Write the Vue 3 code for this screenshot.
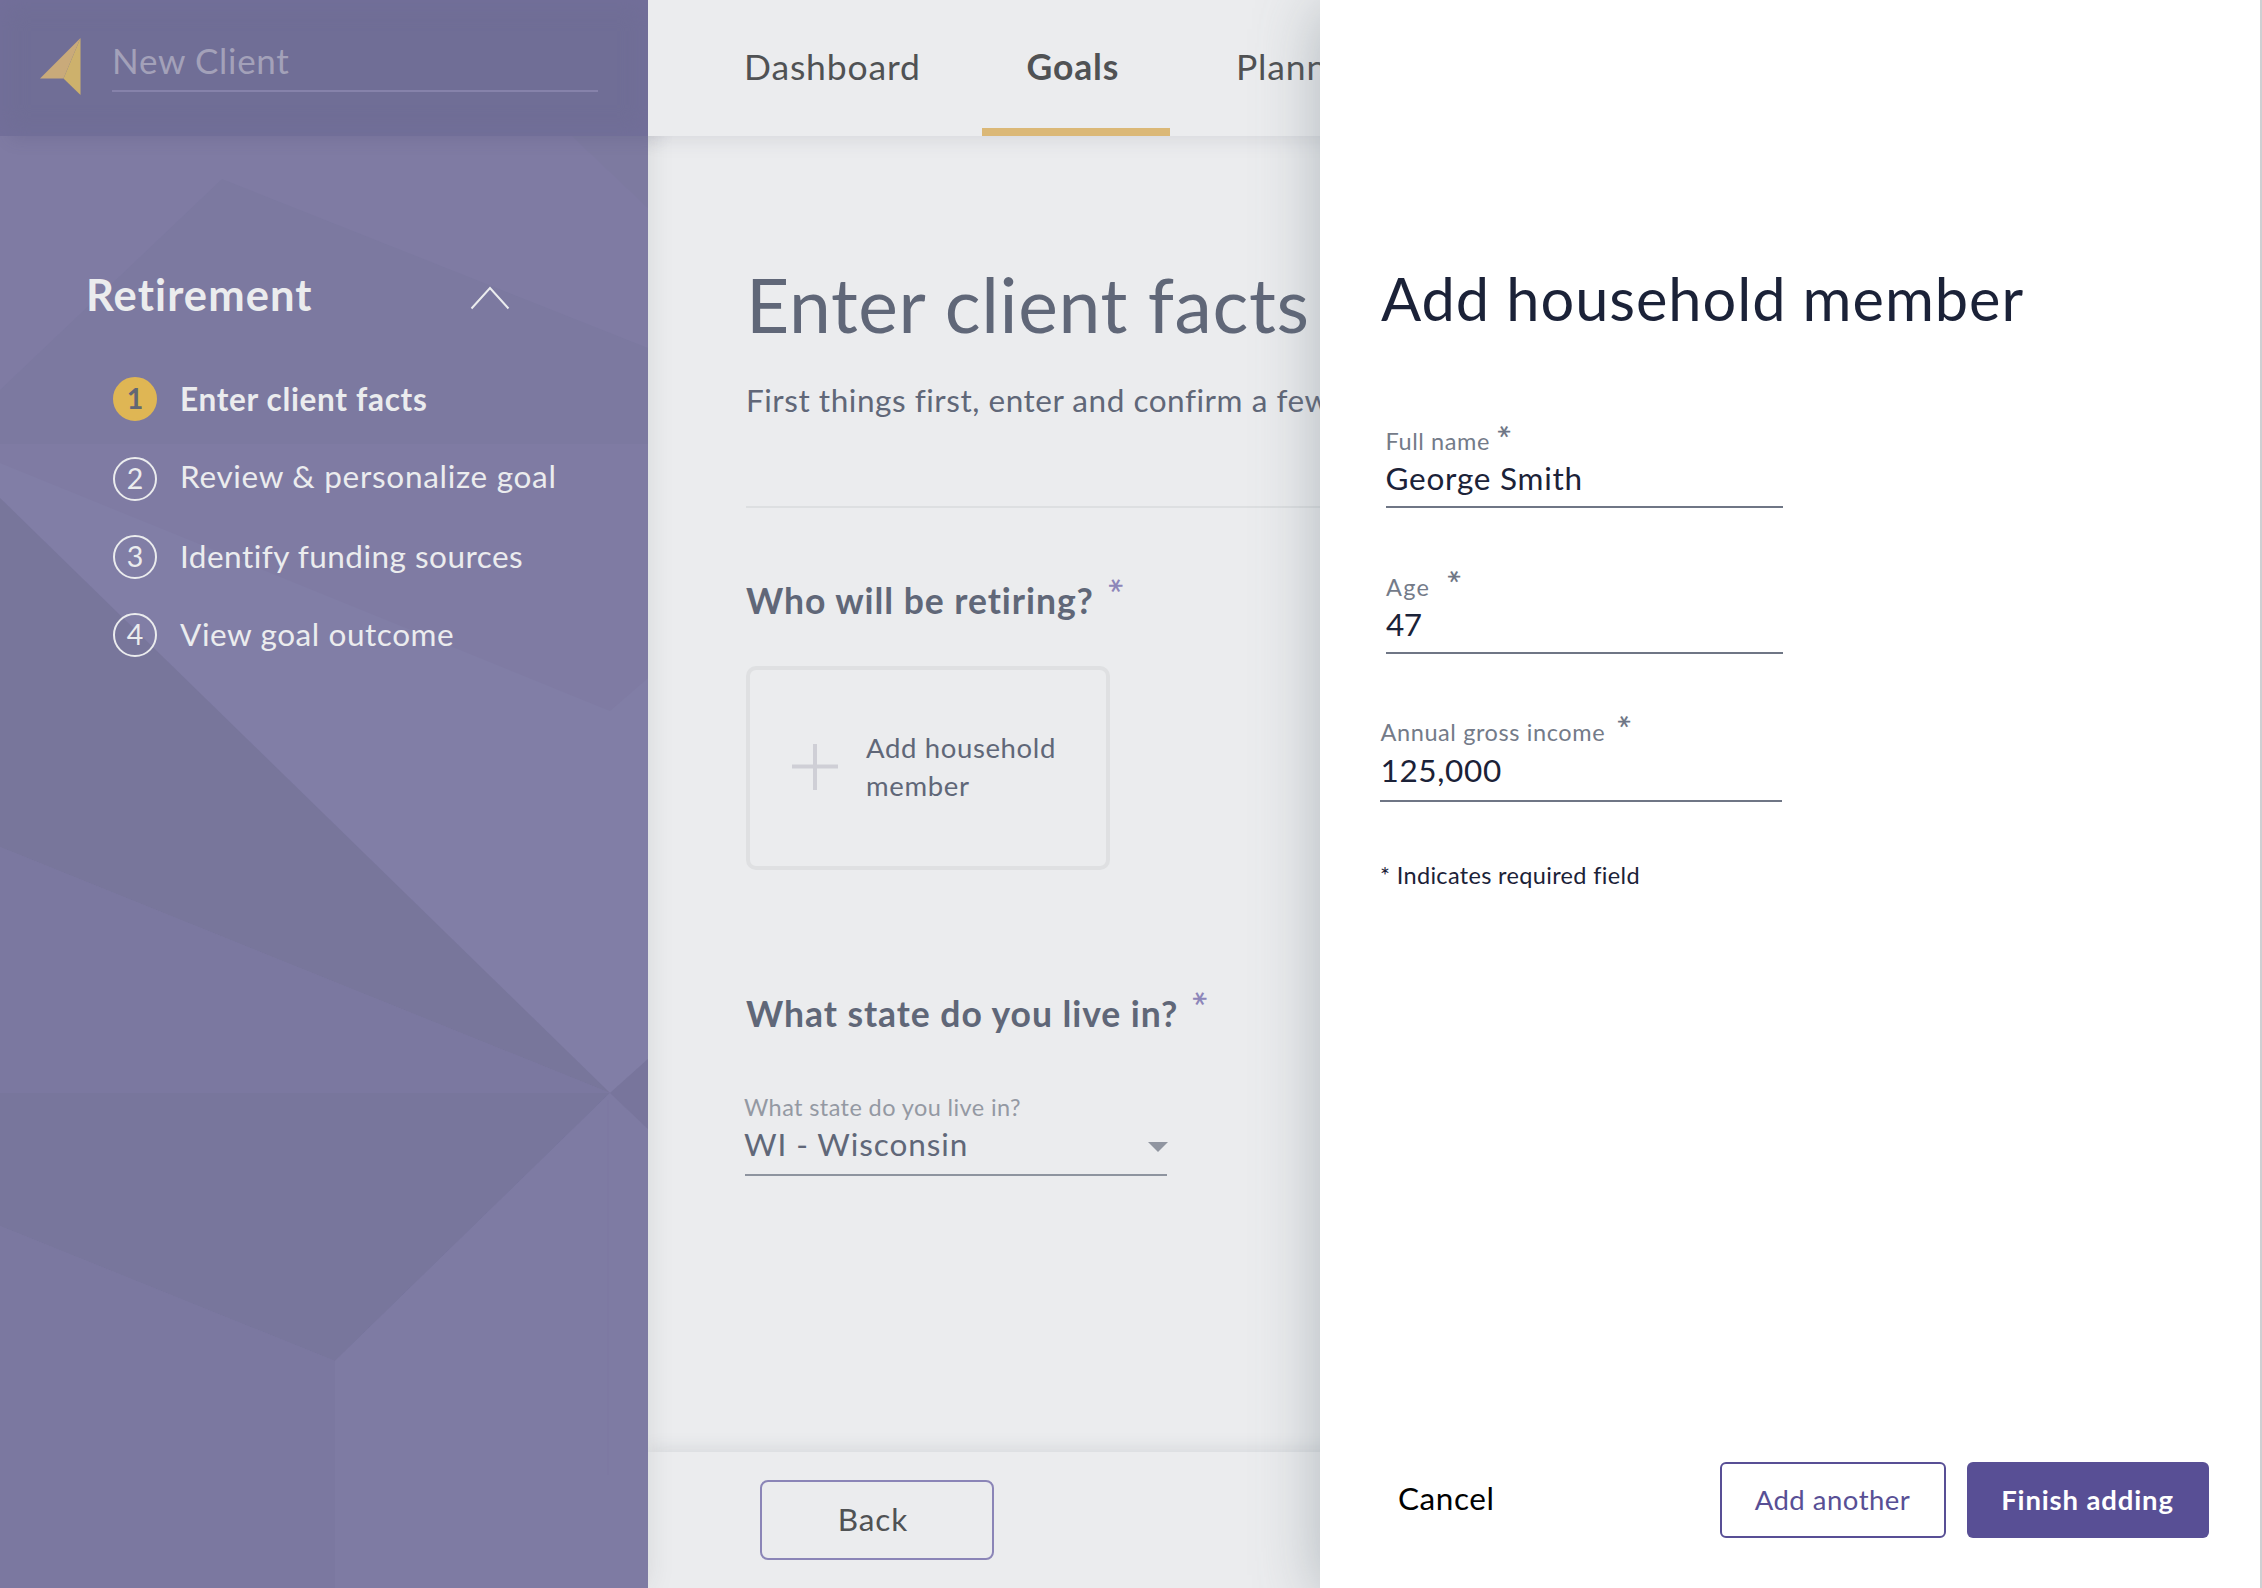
<script setup>
const steps = [
  { n: 1, label: 'Enter client facts', active: true },
  { n: 2, label: 'Review & personalize goal' },
  { n: 3, label: 'Identify funding sources' },
  { n: 4, label: 'View goal outcome' },
]
const fields = [
  { key: 'name', label: 'Full name', value: 'George Smith' },
  { key: 'age', label: 'Age', value: '47' },
  { key: 'income', label: 'Annual gross income', value: '125,000' },
]
</script>

<template>
  <div class="app">
    <aside class="sidebar">
      <svg class="facets" viewBox="0 0 648 1588" preserveAspectRatio="none">
        <rect width="648" height="1588" fill="#7f7ba3" />
        <path d="M0 390L222 179L648 348V444H0Z" fill="#7c79a0" />
        <path d="M572 136H648V208Z" fill="#7d7aa0" />
        <path d="M0 463L610 711L648 678V1059L610 1093L0 498Z" fill="#817ea6" />
        <path d="M0 498L610 1093L0 847Z" fill="#78769b" />
        <path d="M0 847L610 1093H0Z" fill="#7b78a0" />
        <path d="M0 1093H610L335 1361L0 1226Z" fill="#78769c" />
        <path d="M0 1226L335 1361V1588H0Z" fill="#7b78a0" />
        <path d="M335 1361L610 1093L648 1129V1588H335Z" fill="#7e7ba3" />
        <path d="M610 1093L648 1059V1129Z" fill="#78759c" />
        <path d="M608 1100V1475" stroke="#7c79a1" stroke-width="1" />
      </svg>
      <header class="brand">
        <svg class="logo" width="41" height="57" viewBox="0 0 41 57">
          <path d="M40.5 0L0 40.5H23.5Z" fill="#c9aa7a" />
          <path d="M40.5 0V57L23.5 40.5Z" fill="#cdb16c" />
        </svg>
        <div class="client">New Client</div>
      </header>
      <nav class="goal">
        <div class="goal-head">
          <h3>Retirement</h3>
          <svg width="40" height="24" viewBox="0 0 40 24">
            <path d="M1.5 22.5L20 2L38.5 22.5" fill="none" stroke="#ebecee" stroke-width="2" />
          </svg>
        </div>
        <ol>
          <li v-for="s in steps" :key="s.n" :class="['step', 's' + s.n, { active: s.active }]">
            <span class="num">{{ s.n }}</span><span class="lbl">{{ s.label }}</span>
          </li>
        </ol>
      </nav>
    </aside>

    <main class="main">
      <header class="tabs">
        <a class="tab first">Dashboard</a>
        <a class="tab current">Goals</a>
        <a class="tab last">Planning</a>
      </header>
      <section class="content">
        <h1>Enter client facts</h1>
        <p class="lead">First things first, enter and confirm a few</p>
        <hr />
        <h2 class="q1">Who will be retiring?<span class="star">*</span></h2>
        <div class="card">
          <svg width="46" height="46" viewBox="0 0 46 46">
            <path d="M23 0V46M0 22.5H46" stroke="#cfcfd6" stroke-width="4" />
          </svg>
          <span>Add household<br />member</span>
        </div>
        <h2 class="q2">What state do you live in?<span class="star">*</span></h2>
        <div class="select">
          <div class="s-label">What state do you live in?</div>
          <div class="s-value">
            <span>WI - Wisconsin</span>
            <svg width="20" height="10" viewBox="0 0 20 10"><path d="M0 0H20L10 10Z" fill="#9095a0" /></svg>
          </div>
        </div>
      </section>
      <footer class="foot"><button class="back">Back</button></footer>
    </main>

    <section class="drawer">
      <h2 class="title">Add household member</h2>
      <div v-for="f in fields" :key="f.key" :class="['field', f.key]">
        <div class="f-label"><span>{{ f.label }}</span><span class="star">*</span></div>
        <div class="f-value">{{ f.value }}</div>
      </div>
      <p class="note">* Indicates required field</p>
      <footer class="actions">
        <button class="cancel">Cancel</button>
        <button class="another">Add another</button>
        <button class="finish">Finish adding</button>
      </footer>
    </section>
  </div>
</template>

<style>
body { margin: 0; overflow: hidden; }
</style>

<style scoped>
.app {
  position: relative;
  display: flex;
  width: 100vw;
  height: 100vh;
  overflow: hidden;
  background: #ebecee;
  font-family: Lato, "Liberation Sans", sans-serif;
  white-space: nowrap;
}
.app * { box-sizing: border-box; }
h1, h2, h3, p, ol { margin: 0; padding: 0; }
button { font-family: inherit; padding: 0; margin: 0; background: none; border: 0; }

.sidebar {
  position: relative;
  z-index: 1;
  flex: none;
  width: 648px;
  color: #ebecee;
  box-shadow: 0 0 26px rgba(40, 45, 50, .1);
}
.facets { position: absolute; inset: 0; width: 100%; height: 100%; }
.brand {
  position: relative;
  display: flex;
  height: 136px;
  padding: 38px 0 0 40px;
  background: #706e96;
  box-shadow: inset 0 0 26px #736f9b, 10px 3px 16px rgba(70, 70, 100, .16);
}
.client {
  width: 486px;
  height: 54px;
  margin-left: 31px;
  border-bottom: 2px solid #8682aa;
  color: #a3a1b9;
  font-size: 35px;
  line-height: 45px;
  letter-spacing: .7px;
}
.goal { position: relative; }
.goal-head {
  display: flex;
  align-items: center;
  justify-content: space-between;
  height: 52px;
  margin-top: 131px;
  padding: 0 138px 0 86px;
}
.goal-head svg { margin-top: 9px; }
h3 { padding-top: 1px; font-size: 43.5px; line-height: 52px; font-weight: 700; letter-spacing: 1.1px; }
ol { list-style: none; margin: 58px 0 0 113px; }
.step { display: flex; align-items: center; gap: 23px; height: 44px; margin-bottom: 34px; }
.s1 { margin-bottom: 36px; }
.num {
  width: 44px;
  height: 44px;
  padding-bottom: 3px;
  border: 2px solid #ebecee;
  border-radius: 50%;
  text-align: center;
  font-size: 28.5px;
  line-height: 38px;
}
.active .num { background: #dfb654; border-color: #dfb654; color: #626774; font-weight: 700; }
.lbl { font-size: 31.5px; line-height: 40px; letter-spacing: .6px; padding-bottom: 3px; }
.s2 .lbl { padding-bottom: 7px; letter-spacing: .7px; }
.s3 .lbl { letter-spacing: .48px; }
.s4 .lbl { letter-spacing: .58px; }
.active .lbl { font-weight: 700; letter-spacing: .68px; padding-bottom: 1px; }

.main { flex: 1; display: flex; flex-direction: column; min-width: 0; }
.tabs {
  position: relative;
  z-index: 2;
  display: flex;
  height: 136px;
  padding-left: 96px;
  background: #ebecee;
  box-shadow: 0 2px 20px rgba(60, 65, 85, .13);
  clip-path: inset(0 0 -40px 0);
  color: #505254;
  font-size: 35.5px;
  line-height: 134px;
  letter-spacing: .85px;
}
.first { width: 238px; }
.current {
  width: 188px;
  padding-left: 44.5px;
  border-bottom: 8px solid #dbb877;
  font-weight: 700;
  letter-spacing: .85px;
}
.last { margin-left: 66px; }
.content { flex: 1; padding: 123px 0 0 98px; color: #606778; }
h1 { font-size: 75px; line-height: 90px; font-weight: 400; letter-spacing: .65px; }
.lead { margin-top: 31px; font-size: 31.5px; line-height: 40px; letter-spacing: .53px; }
hr { margin: 86px 0 0; height: 2px; border: 0; background: #dddfe1; }
.q1, .q2 { font-size: 35.5px; line-height: 44px; font-weight: 700; letter-spacing: .95px; }
.q1 { margin-top: 71px; }
.q2 { margin-top: 122px; }
.star {
  display: inline-block;
  width: 16px;
  height: 16px;
  line-height: 34px;
  font-size: 41px;
  font-weight: 600;
  letter-spacing: 0;
  transform: rotate(90deg);
}
.content .star { margin-left: 14px; margin-top: -2px; vertical-align: top; color: #8d86b9; }
.card {
  display: flex;
  align-items: center;
  width: 364px;
  height: 204px;
  margin-top: 43px;
  padding: 0 0 2px 42px;
  border: 4px solid #dfe0e2;
  border-radius: 10px;
  font-size: 27.5px;
  line-height: 38px;
  letter-spacing: .64px;
}
.card span { margin-left: 28px; }
.select { width: 422px; margin: 56px 0 0 -1px; padding-bottom: 10px; border-bottom: 2px solid #8e949f; }
.s-label { margin-left: -1px; font-size: 23.5px; line-height: 30px; letter-spacing: .4px; color: #9499a3; }
.s-value {
  display: flex;
  align-items: center;
  justify-content: space-between;
  margin: 2px -1px 0 -1px;
  font-size: 31.5px;
  line-height: 40px;
  letter-spacing: .9px;
}
.s-value svg { margin-top: 6px; }
.foot {
  height: 136px;
  padding: 28px 0 0 112px;
  background: #ebecee;
  box-shadow: 0 -2px 18px rgba(60, 65, 85, .12);
}
.back {
  display: block;
  width: 234px;
  height: 80px;
  padding: 0 8px 3px 0;
  border: 2px solid #8b85b7;
  border-radius: 8px;
  color: #505254;
  font-size: 31.5px;
  letter-spacing: .9px;
}

.drawer {
  position: absolute;
  z-index: 3;
  top: 0;
  right: 0;
  bottom: 0;
  width: 942px;
  display: flex;
  flex-direction: column;
  padding: 263px 51px 0 60px;
  border-right: 2px solid #cdd0d3;
  background: #fff;
  box-shadow: 0 8px 60px rgba(95, 112, 122, .42);
  color: #1b2238;
}
.title { margin-left: 1px; font-size: 59.5px; line-height: 70px; font-weight: 400; letter-spacing: .95px; }
.field { width: 397px; margin: 64px 0 0 6px; padding-bottom: 8px; border-bottom: 2px solid #6f7685; }
.name { margin-top: 93px; }
.income { width: 402px; margin: 63px 0 0 0; padding-bottom: 11px; }
.f-label { display: flex; height: 30px; font-size: 23.5px; line-height: 30px; letter-spacing: .6px; color: #747b89; }
.f-label .star { font-size: 36px; line-height: 30px; width: 14px; height: 14px; margin: -2px 0 0 7px; color: #6f7685; }
.f-value { margin-top: 2px; font-size: 31.5px; line-height: 40px; letter-spacing: .75px; }
.name .f-label { margin-left: -.5px; }
.name .f-value { margin-left: -.5px; }
.age .f-label { letter-spacing: 1.28px; }
.age .f-value { letter-spacing: -.6px; }
.age .f-label .star { margin: -3px 0 0 16.5px; }
.income .f-label { margin-left: .5px; }
.income .f-value { margin-left: .5px; padding-top: 1px; margin-bottom: -1px; letter-spacing: .65px; }
.income .f-label .star { margin: -3px 0 0 12px; }
.note { margin-top: 58px; font-size: 23.5px; line-height: 30px; letter-spacing: .34px; }
.actions { display: flex; margin: auto 0 50px; height: 76px; }
.cancel { margin: 0 auto 0 18px; padding-bottom: 5px; color: #000; font-size: 31.5px; letter-spacing: .57px; }
.another {
  width: 226px;
  padding: 0 1px 1px 0;
  border: 2px solid #584f95;
  border-radius: 6px;
  color: #584f95;
  font-size: 27.5px;
  letter-spacing: .5px;
}
.finish {
  width: 242px;
  margin-left: 21px;
  padding: 0 1px 1px 0;
  border-radius: 6px;
  background: #584f95;
  color: #fff;
  font-size: 27.5px;
  font-weight: 700;
  letter-spacing: .86px;
}
</style>
